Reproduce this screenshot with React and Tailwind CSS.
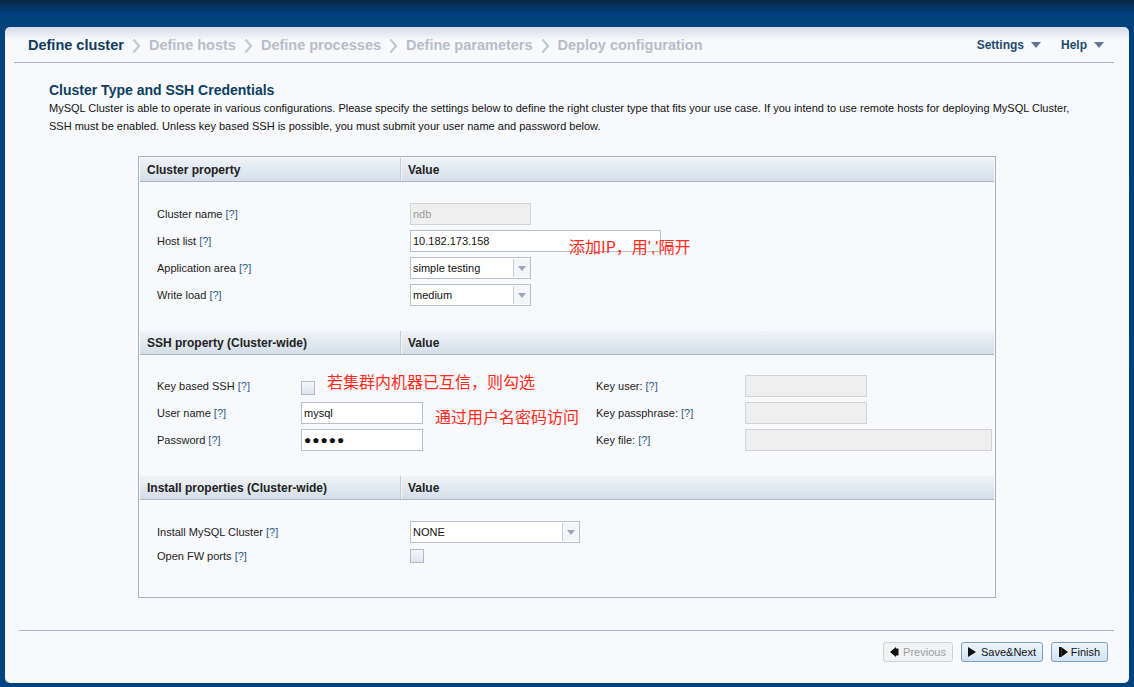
import React from "react";

const Q = () => <span className="text-[#2a5d88]">[?]</span>;

const Chevron = () => (
  <svg width="9" height="16" viewBox="0 0 9 16" className="mx-[8px]">
    <path d="M1.5 1.5 L7 8 L1.5 14.5" fill="none" stroke="#c2c8d1" strokeWidth="2.2" />
  </svg>
);

const Caret = () => (
  <svg width="10" height="6" viewBox="0 0 10 6" className="ml-[7px]">
    <path d="M0 0 L10 0 L5 6 Z" fill="#5d7894" />
  </svg>
);

const Input = ({ w, value, disabled, pw }) => (
  <div
    className={
      "h-[22px] flex items-center px-[2px] text-[11px] border " +
      (disabled
        ? "bg-[#efefef] border-[#d2d2d2] text-[#9a9a9a]"
        : "bg-white border-[#b8bfc9] text-[#111]")
    }
    style={{ width: w }}
  >
    {pw ? <span className="tracking-[1px] text-[12px] leading-none">●●●●●</span> : value}
  </div>
);

const Select = ({ w, value }) => (
  <div
    className="h-[22px] flex items-stretch bg-white border border-[#b8bfc9] text-[11px] text-[#111]"
    style={{ width: w }}
  >
    <div className="flex-1 flex items-center px-[2px]">{value}</div>
    <div className="w-[17px] flex items-center justify-center bg-[#f4f5f7] border-l border-[#c9cdd3] my-[1px]">
      <svg width="8" height="5" viewBox="0 0 8 5">
        <path d="M0 0 L8 0 L4 5 Z" fill="#93a6c2" />
      </svg>
    </div>
  </div>
);

const Check = () => (
  <div className="w-[14px] h-[14px] border border-[#b3b9c4] bg-[linear-gradient(#f4f6f9,#dce5ee)]" />
);

const Header = ({ title }) => (
  <div className="h-[24px] flex border-b border-[#aeb8c4] bg-[linear-gradient(#eff3f7,#d4dee8)] text-[12px] font-bold text-[#222]">
    <div className="w-[260px] flex items-center pl-[7px]">{title}</div>
    <div className="flex-1 flex items-center pl-[7px] border-l border-[#c3ccd6] shadow-[inset_1px_0_0_#f4f7fa]">
      Value
    </div>
  </div>
);

const Note = ({ children, className }) => (
  <span
    className={
      "absolute whitespace-nowrap text-[16px] leading-none text-[#ff2a1a] font-['Noto_Sans_CJK_SC','Noto_Sans',sans-serif] " +
      className
    }
  >
    {children}
  </span>
);

const Row = ({ children, className = "" }) => (
  <div className={"h-[22px] flex items-center " + className}>{children}</div>
);

export default function App() {
  return (
    <div className="h-[687px] w-[1134px] overflow-hidden pt-[27px] px-[5px] pb-[4px] bg-[linear-gradient(#0a2544,#02417e_14px,#01437f)] font-['Liberation_Sans',Arial,sans-serif] text-[#111]">
      <div className="h-full rounded-[5px] bg-[linear-gradient(#d3dbe7,#f8f9fc_13px,#f8f9fc)] flex flex-col">
        {/* nav */}
        <div className="ml-[9px] mr-[15px] h-[36px] border-b border-[#abb6c6] flex items-center justify-between pl-[14px] pr-[10px]">
          <div className="flex items-center text-[14.5px] font-bold pt-[2px]">
            <span className="text-[#0e3b5d]">Define cluster</span>
            <Chevron />
            <span className="text-[#b6bdc8]">Define hosts</span>
            <Chevron />
            <span className="text-[#b6bdc8]">Define processes</span>
            <Chevron />
            <span className="text-[#b6bdc8]">Define parameters</span>
            <Chevron />
            <span className="text-[#b6bdc8]">Deploy configuration</span>
          </div>
          <div className="flex items-center text-[12px] font-bold text-[#1c4a70] pt-[1px]">
            <span className="flex items-center">
              Settings
              <Caret />
            </span>
            <span className="flex items-center ml-[20px]">
              Help
              <Caret />
            </span>
          </div>
        </div>

        {/* content */}
        <div className="pl-[44px]">
          <div className="mt-[18px] text-[14px] leading-[18px] font-bold text-[#0c3e60]">
            Cluster Type and SSH Credentials
          </div>
          <div className="text-[11px] leading-[18px] text-[#111] whitespace-nowrap">
            <div>
              MySQL Cluster is able to operate in various configurations. Please specify the settings below to define the right cluster type that fits your use case. If you intend to use remote hosts for deploying MySQL Cluster,
            </div>
            <div>
              SSH must be enabled. Unless key based SSH is possible, you must submit your user name and password below.
            </div>
          </div>

          {/* table */}
          <div className="mt-[21px] ml-[89px] w-[858px] border border-[#a9b1be] p-px text-[11px] text-[#222]">
            <Header title="Cluster property" />
            <div className="pt-[21px] pb-[25px] pl-[17px] flex flex-col gap-[5px]">
              <Row>
                <span className="w-[253px]">Cluster name <Q /></span>
                <Input w="121px" value="ndb" disabled />
              </Row>
              <Row className="relative">
                <span className="w-[253px]">Host list <Q /></span>
                <Input w="251px" value="10.182.173.158" />
                <Note className="left-[412px] top-[8px]">
                  添加IP，用<span className="font-['Liberation_Sans',sans-serif]">','</span>隔开
                </Note>
              </Row>
              <Row>
                <span className="w-[253px]">Application area <Q /></span>
                <Select w="121px" value="simple testing" />
              </Row>
              <Row>
                <span className="w-[253px]">Write load <Q /></span>
                <Select w="121px" value="medium" />
              </Row>
            </div>

            <Header title="SSH property (Cluster-wide)" />
            <div className="pt-[20px] pb-[25px] pl-[17px] flex">
              <div className="w-[439px] flex flex-col gap-[5px]">
                <Row className="relative">
                  <span className="w-[144px] pt-[1px]">Key based SSH <Q /></span>
                  <div className="pt-[3px]">
                    <Check />
                  </div>
                  <Note className="left-[170px] top-[-2px]">若集群内机器已互信，则勾选</Note>
                </Row>
                <Row className="relative">
                  <span className="w-[144px]">User name <Q /></span>
                  <Input w="122px" value="mysql" />
                  <Note className="left-[278px] top-[6px]">通过用户名密码访问</Note>
                </Row>
                <Row>
                  <span className="w-[144px]">Password <Q /></span>
                  <Input w="122px" pw />
                </Row>
              </div>
              <div className="flex-1 flex flex-col gap-[5px]">
                <Row>
                  <span className="w-[149px] pt-[1px]">Key user: <Q /></span>
                  <Input w="122px" disabled />
                </Row>
                <Row>
                  <span className="w-[149px]">Key passphrase: <Q /></span>
                  <Input w="122px" disabled />
                </Row>
                <Row>
                  <span className="w-[149px]">Key file: <Q /></span>
                  <Input w="247px" disabled />
                </Row>
              </div>
            </div>

            <Header title="Install properties (Cluster-wide)" />
            <div className="pt-[21px] pb-[33px] pl-[17px] flex flex-col">
              <Row>
                <span className="w-[253px]">Install MySQL Cluster <Q /></span>
                <Select w="170px" value="NONE" />
              </Row>
              <div className="mt-[6px] h-[14px] flex items-center">
                <span className="w-[253px]">Open FW ports <Q /></span>
                <Check />
              </div>
            </div>
          </div>
        </div>

        {/* footer */}
        <div className="mt-[32px] ml-[14px] mr-[15px] border-t border-[#abb6c6] flex justify-end pr-[6px] pt-[11px] gap-[8px] text-[11px]">
          <div className="h-[20px] w-[70px] flex items-center justify-center gap-[4px] rounded-[3px] border border-[#cdd0d4] bg-[#f1f2f4] text-[#9a9ea4]">
            <svg width="9" height="10" viewBox="0 0 9 10">
              <path d="M0 5 L6 0 L6 10 Z" fill="#111" />
              <rect x="6" y="1.5" width="2.5" height="7" fill="#111" />
            </svg>
            Previous
          </div>
          <div className="h-[20px] w-[82px] flex items-center justify-center gap-[5px] rounded-[3px] border border-[#7f9fc0] bg-[linear-gradient(#eef5fc,#d2e3f4)] text-[#111]">
            <svg width="8" height="10" viewBox="0 0 8 10">
              <path d="M0 0 L8 5 L0 10 Z" fill="#111" />
            </svg>
            Save&amp;Next
          </div>
          <div className="h-[20px] w-[57px] flex items-center justify-center gap-[3px] rounded-[3px] border border-[#7f9fc0] bg-[linear-gradient(#eef5fc,#d2e3f4)] text-[#111]">
            <svg width="9" height="10" viewBox="0 0 9 10">
              <rect x="0" y="0" width="2.2" height="10" fill="#111" />
              <path d="M2.2 0 L9 5 L2.2 10 Z" fill="#111" />
            </svg>
            Finish
          </div>
        </div>
      </div>
    </div>
  );
}
